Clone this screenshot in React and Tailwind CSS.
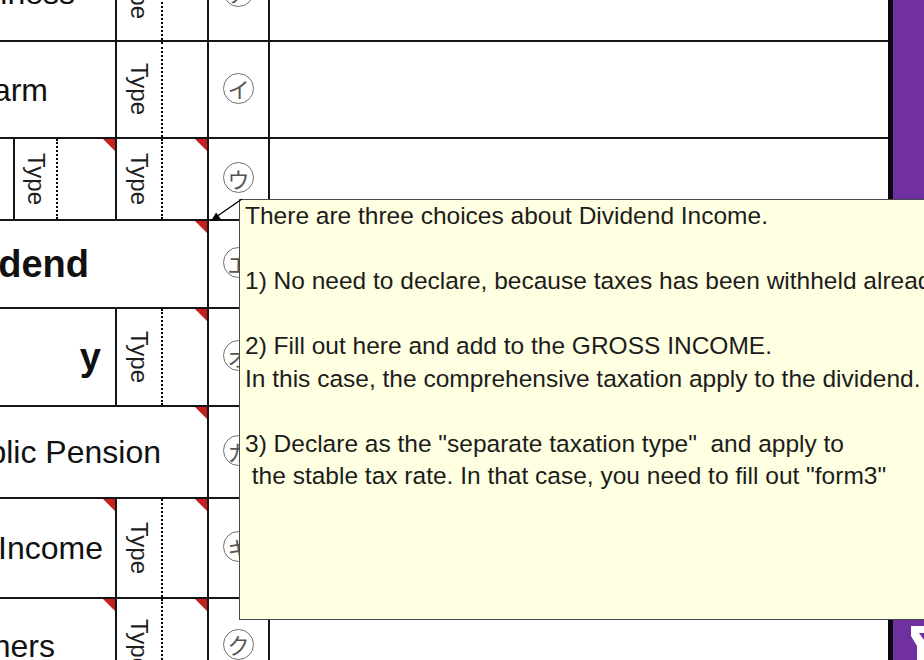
import React from 'react';
import { clsx } from 'clsx';

// red comment marker in the top-right corner of a cell
const Flag = () => (
    <span className="absolute top-0 right-0 w-0 h-0 border-t-[12px] border-l-[12px] border-t-[#c3201f] border-l-transparent" />
);

const Label = ({ w = 'w-[117px]', pr, bold, flag, children }) => (
    <div
        className={clsx(
            'relative h-full shrink-0 flex items-center justify-end overflow-hidden whitespace-nowrap border-r-2 border-[#151515] text-[#111]',
            w,
            pr,
            bold ? 'font-bold text-[38px]' : 'text-[32px]'
        )}
    >
        <span>{children}</span>
        {flag && <Flag />}
    </div>
);

const TypeCell = ({ w = 'w-[46px]' }) => (
    <div className={clsx('h-full shrink-0 flex items-center justify-center border-r-2 border-dotted border-black', w)}>
        <span className="[writing-mode:vertical-rl] text-[24px] leading-none text-[#1e1e1e]">Type</span>
    </div>
);

const Blank = ({ w = 'w-[46px]', flag }) => (
    <div className={clsx('relative h-full shrink-0 border-r-2 border-[#151515]', w)}>
        {flag && <Flag />}
    </div>
);

const Mark = ({ ch }) => (
    <div className="w-[61px] h-full shrink-0 flex items-center justify-center border-r-2 border-[#151515]">
        <span className="w-[31px] h-[31px] -mt-[3px] rounded-full border border-[#707070] flex items-center justify-center text-[22px] leading-none text-[#555] font-['Noto_Sans_CJK_JP',sans-serif]">
            {ch}
        </span>
    </div>
);

const Row = ({ h, mark, children }) => (
    <div className={clsx('flex shrink-0 border-b-2 border-[#151515]', h)}>
        {children}
        <Mark ch={mark} />
        <div className="flex-1" />
    </div>
);

const note = [
    'There are three choices about Dividend Income.',
    '',
    '1) No need to declare, because taxes has been withheld already.',
    '',
    '2) Fill out here and add to the GROSS INCOME.',
    'In this case, the comprehensive taxation apply to the dividend.',
    '',
    '3) Declare as the "separate taxation type"  and apply to',
    ' the stable tax rate. In that case, you need to fill out "form3"',
].join('\n');

export default function App() {
    return (
        <div className="relative w-[924px] h-[660px] overflow-hidden bg-white flex font-['Liberation_Sans',Arial,sans-serif]">
            <div className="w-[888px] shrink-0 -mt-[54px] flex flex-col">
                <Row h="h-[96px]" mark="ア">
                    <Label pr="pr-[40px]">Business</Label>
                    <TypeCell />
                    <Blank />
                </Row>
                <Row h="h-[97px]" mark="イ">
                    <Label pr="pr-[67px]">Farm</Label>
                    <TypeCell />
                    <Blank />
                </Row>
                <Row h="h-[82px]" mark="ウ">
                    <Blank w="w-[15px]" />
                    <TypeCell w="w-[43px]" />
                    <Blank w="w-[59px]" flag />
                    <TypeCell />
                    <Blank flag />
                </Row>
                <Row h="h-[88px]" mark="エ">
                    <Label w="w-[209px]" pr="pr-[118px]" bold flag>Dividend</Label>
                </Row>
                <Row h="h-[98px]" mark="オ">
                    <Label pr="pr-[14px]" bold>y</Label>
                    <TypeCell />
                    <Blank flag />
                </Row>
                <Row h="h-[92px]" mark="カ">
                    <Label w="w-[209px]" pr="pr-[46px]" flag>Public Pension</Label>
                </Row>
                <Row h="h-[100px]" mark="キ">
                    <Label pr="pr-[12px]" flag>Income</Label>
                    <TypeCell />
                    <Blank flag />
                </Row>
                <Row h="h-[95px]" mark="ク">
                    <Label pr="pr-[60px]" flag>Others</Label>
                    <TypeCell />
                    <Blank flag />
                </Row>
            </div>
            <div className="w-[5px] shrink-0 bg-[#0c0812]" />
            <div className="relative flex-1 bg-[#7030a0]">
                <svg className="absolute left-0 top-0" width="31" height="660">
                    <path d="M18 626 L31 626 L31 633 L26 633 L31 640 L31 660 L24 660 L24 646 L18 636 Z" fill="#fff" />
                </svg>
            </div>

            {/* cell comment */}
            <div className="absolute left-[239px] top-[199px] w-[760px] h-[421px] border border-[#4a4a4a] bg-[#ffffe1] pl-[5px] whitespace-pre text-[24.5px] leading-[32.5px] text-[#1c1c1c]">
                {note}
            </div>
            <svg className="absolute left-0 top-0 pointer-events-none" width="924" height="660">
                <line x1="242" y1="199" x2="216" y2="217" stroke="#000" strokeWidth="1.3" />
                <polygon points="211,221 220.7,219.1 216.1,212.5" fill="#000" />
            </svg>
        </div>
    );
}
